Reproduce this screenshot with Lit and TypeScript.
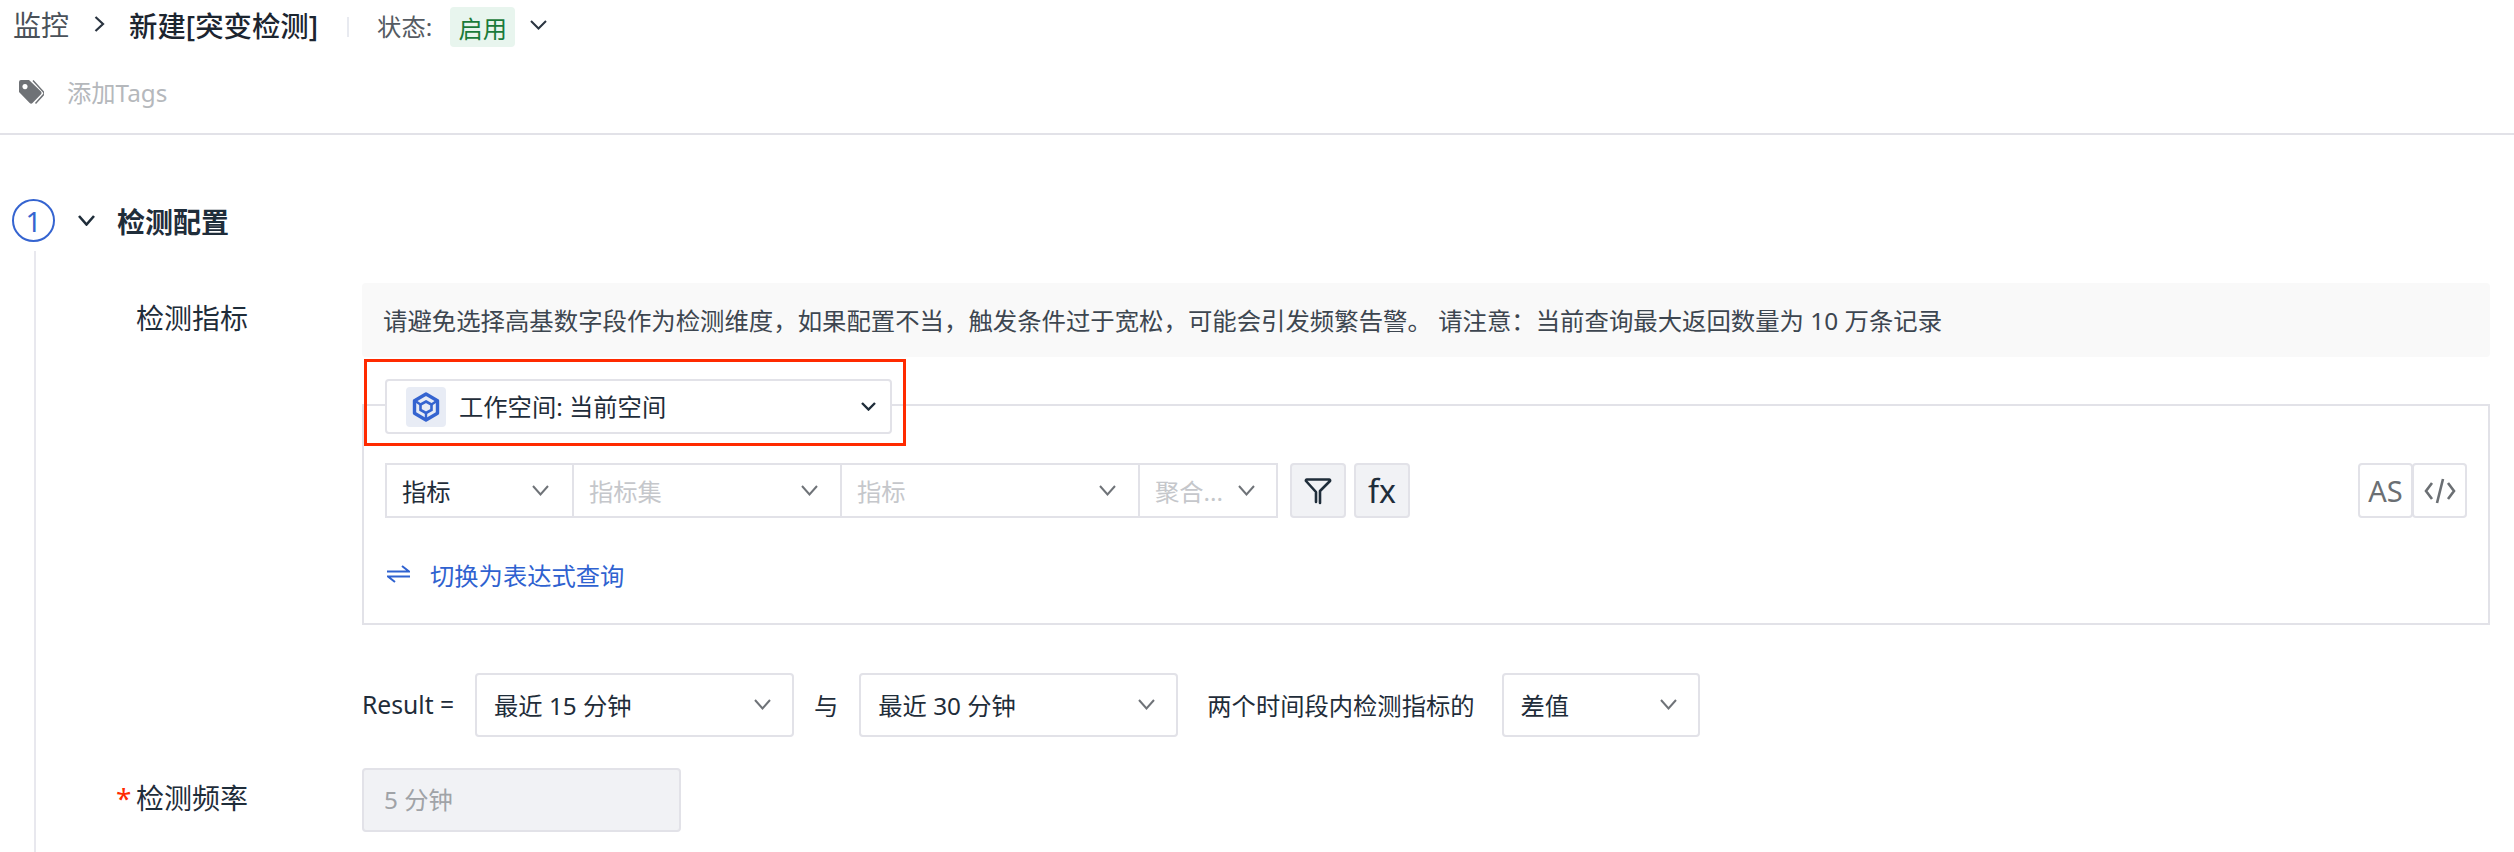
import { LitElement, html, css, svg } from 'lit'
import { customElement } from 'lit/decorators.js'

const chevron = (w: number, h: number, color: string, sw = 2) => html`
    <svg class="chev" width=${w} height=${h} viewBox="0 0 ${w} ${h}" fill="none" stroke=${color} stroke-width=${sw}>
        <polyline points="1,1 ${w / 2},${h - 1.5} ${w - 1},1" />
    </svg>
`

const hexIcon = svg`
    <path d="M14 2 L25.5 8.7 V21.3 L14 28 L2.5 21.3 V8.7 Z" fill="none" stroke="#3564d0" stroke-width="3.4" stroke-linejoin="round" />
    <path d="M14 9.5 L19.5 12.6 V18 L14 21 L8.5 18 V12.6 Z" fill="none" stroke="#3564d0" stroke-width="2.6" />
    <path d="M14 21 V27 M4 9.6 L8.5 12.6 M24 9.6 L19.5 12.6" stroke="#3564d0" stroke-width="2.4" />
`

@customElement('app-root')
export class AppRoot extends LitElement {
    static styles = css`
        :host {
            display: block;
            width: 2514px;
            height: 852px;
            overflow: hidden;
            background: #fff;
            color: #1f2d3a;
            font-family: 'Noto Sans', 'Noto Sans CJK SC', sans-serif;
            font-size: 24.3px;
        }

        .chev {
            flex: none;
        }

        /* header */
        .head {
            height: 135px;
            box-sizing: border-box;
            border-bottom: 2px solid #e2e2e8;
            padding: 7px 0 0 13px;
        }
        .crumbs {
            display: flex;
            align-items: center;
            height: 40px;
        }
        .crumb-root {
            font-size: 28px;
            color: #4a5159;
            margin-top: -6px;
        }
        .crumb-sep {
            margin: -6px 0 0 25px;
        }
        .crumb-title {
            font-size: 28.4px;
            font-weight: 500;
            color: #1c2530;
            margin: -6px 0 0 24px;
        }
        .crumb-div {
            width: 2px;
            height: 20px;
            background: #e8eaf0;
            margin: 0 28px 0 29px;
        }
        .status-label {
            color: #555b62;
            margin-top: -3px;
        }
        .status-tag {
            width: 65px;
            height: 40px;
            margin-left: 18px;
            border-radius: 4px;
            background: #e8f5ee;
            color: #1a7a3a;
            display: flex;
            align-items: center;
            justify-content: center;
        }
        .status-chev {
            display: flex;
            margin: -5px 0 0 15px;
        }
        .tags {
            display: flex;
            align-items: center;
            height: 40px;
            margin: 24px 0 0 5px;
            color: #b5b8bc;
        }
        .tags svg {
            margin: 2px 23px 0 0;
        }

        /* step rail + body */
        .section {
            display: grid;
            grid-template-columns: 78px 1fr;
            padding-top: 64px;
        }
        .rail {
            display: flex;
            flex-direction: column;
            height: 660px;
        }
        .circle {
            width: 43px;
            height: 43px;
            box-sizing: border-box;
            margin-left: 12px;
            border: 2px solid #3564d0;
            border-radius: 50%;
            color: #3564d0;
            font-size: 28px;
            display: flex;
            align-items: center;
            justify-content: center;
        }
        .rail-line {
            flex: 1;
            width: 2px;
            margin: 9px 0 0 34px;
            background: #e8e8ee;
        }
        .title-row {
            display: flex;
            align-items: center;
            height: 43px;
        }
        .title-row h2 {
            margin: 0 0 0 22px;
            font-size: 28px;
            font-weight: 700;
            color: #1f2d3a;
        }
        .form-row {
            display: grid;
            grid-template-columns: 284px 2128px;
        }
        .form-row.first {
            margin-top: 41px;
        }
        .label {
            font-size: 28px;
            padding-left: 58px;
            line-height: 71px;
            white-space: nowrap;
        }
        .req {
            color: #ff2a00;
            display: inline-block;
            width: 20px;
            margin-left: -20px;
        }

        .notice {
            height: 74px;
            box-sizing: border-box;
            padding: 0 21px 2px;
            display: flex;
            align-items: center;
            background: #f9f9f9;
            border-radius: 4px;
            color: #3d4650;
            font-size: 24.4px;
            white-space: nowrap;
        }

        /* query panel */
        .panel {
            height: 221px;
            box-sizing: border-box;
            margin-top: 47px;
            padding: 0 21px;
            border: 2px solid #e2e2e8;
        }
        .ws-select {
            position: relative;
            width: 507px;
            height: 55px;
            box-sizing: border-box;
            margin-top: -27px;
            padding: 0 14px 0 19px;
            display: flex;
            align-items: center;
            background: #fff;
            border: 2px solid #e2e2e8;
            border-radius: 4px;
        }
        .ws-icon {
            width: 40px;
            height: 40px;
            flex: none;
            border-radius: 4px;
            background: #e8ecf5;
            display: flex;
            align-items: center;
            justify-content: center;
        }
        .ws-text {
            flex: 1;
            margin: -2px 0 0 13px;
            white-space: nowrap;
        }
        .highlight {
            position: absolute;
            left: -23px;
            right: -16px;
            top: -22px;
            bottom: -14px;
            border: 3px solid #ff2a00;
        }
        .query {
            display: flex;
            height: 55px;
            margin-top: 29px;
        }
        .seg {
            box-sizing: border-box;
            height: 55px;
            margin-right: -2px;
            padding: 0 22px 0 15px;
            display: flex;
            align-items: center;
            justify-content: space-between;
            border: 2px solid #e2e2e8;
            white-space: nowrap;
        }
        .seg.metric { width: 189px; padding-right: 23px; }
        .seg.set { width: 270px; }
        .seg.name { width: 300px; }
        .seg.agg { width: 140px; margin-right: 0; padding-right: 21px; }
        .placeholder {
            color: #c5c7cb;
        }
        .tool {
            box-sizing: border-box;
            width: 56px;
            height: 55px;
            margin-left: 8px;
            display: flex;
            align-items: center;
            justify-content: center;
            background: #f1f2f5;
            border: 2px solid #e2e2e8;
            border-radius: 4px;
            font-size: 32px;
        }
        .tool.first {
            margin-left: 12px;
        }
        .side-tools {
            display: flex;
            margin-left: auto;
        }
        .side {
            box-sizing: border-box;
            width: 55px;
            height: 55px;
            margin-left: -1px;
            display: flex;
            align-items: center;
            justify-content: center;
            border: 2px solid #e2e2e8;
            border-radius: 4px;
            color: #6b6f73;
            font-size: 29px;
        }
        .switch {
            display: flex;
            align-items: center;
            height: 36px;
            margin-top: 38px;
            color: #2f62d0;
        }
        .switch svg {
            margin: 0 20px 0 2px;
        }

        /* result row */
        .result {
            display: flex;
            align-items: center;
            height: 64px;
            margin: 48px 0 0 284px;
            white-space: nowrap;
        }
        .box {
            box-sizing: border-box;
            height: 64px;
            display: flex;
            align-items: center;
            justify-content: space-between;
            padding: 0 21px 2px 17px;
            border: 2px solid #e2e2e8;
            border-radius: 4px;
        }
        .w319 { width: 319px; }
        .w198 { width: 198px; }
        .res-label { margin: -2px 21px 0 0; width: 92px; font-size: 24.7px; }
        .res-and { margin: -2px 21px 0 20px; }
        .res-desc { margin: -2px 27px 0 29px; }

        .freq {
            margin-top: 31px;
        }
        .freq .label {
            line-height: 61px;
        }
        .input-off {
            box-sizing: border-box;
            width: 319px;
            height: 64px;
            padding: 0 0 3px 20px;
            display: flex;
            align-items: center;
            background: #f1f2f5;
            border: 2px solid #e2e2e8;
            border-radius: 4px;
            color: #a0a3a7;
        }
    `

    render() {
        return html`
            <header class="head">
                <div class="crumbs">
                    <span class="crumb-root">监控</span>
                    <svg class="crumb-sep" width="11" height="16" viewBox="0 0 11 16" fill="none" stroke="#2a3440" stroke-width="2.2">
                        <polyline points="1.5,1 9,8 1.5,15" />
                    </svg>
                    <span class="crumb-title">新建[突变检测]</span>
                    <span class="crumb-div"></span>
                    <span class="status-label">状态:</span>
                    <span class="status-tag">启用</span>
                    <span class="status-chev">${chevron(17, 10, '#2a3440')}</span>
                </div>
                <div class="tags">
                    <svg width="26" height="26" viewBox="0 0 26 26">
                        <path d="M1 3 a2 2 0 0 1 2 -2 H11 L23 12.5 a2 2 0 0 1 0 2.8 L14.5 24 a2 2 0 0 1 -2.8 0 L1 13 Z M7 5 a2.6 2.6 0 1 0 .01 0 Z" fill="#6f7276" fill-rule="evenodd" />
                        <path d="M15 1.5 L25.5 13 a2 2 0 0 1 0 2.6 L17.5 24.5" fill="none" stroke="#6f7276" stroke-width="1.5" />
                    </svg>
                    <span>添加Tags</span>
                </div>
            </header>

            <section class="section">
                <div class="rail">
                    <div class="circle">1</div>
                    <div class="rail-line"></div>
                </div>
                <div class="body">
                    <div class="title-row">
                        ${chevron(17, 11, '#1f2d3a', 2.6)}
                        <h2>检测配置</h2>
                    </div>

                    <div class="form-row first">
                        <div class="label">检测指标</div>
                        <div>
                            <div class="notice">请避免选择高基数字段作为检测维度，如果配置不当，触发条件过于宽松，可能会引发频繁告警。 请注意：当前查询最大返回数量为 10 万条记录</div>
                            <div class="panel">
                                <div class="ws-select">
                                    <span class="ws-icon">
                                        <svg width="28" height="30" viewBox="0 0 28 30">${hexIcon}</svg>
                                    </span>
                                    <span class="ws-text">工作空间: 当前空间</span>
                                    ${chevron(15, 9, '#1f2d3a', 2.4)}
                                    <div class="highlight"></div>
                                </div>
                                <div class="query">
                                    <div class="seg metric"><span>指标</span>${chevron(17, 11, '#6f7378')}</div>
                                    <div class="seg set"><span class="placeholder">指标集</span>${chevron(17, 11, '#6f7378')}</div>
                                    <div class="seg name"><span class="placeholder">指标</span>${chevron(17, 11, '#6f7378')}</div>
                                    <div class="seg agg"><span class="placeholder">聚合...</span>${chevron(17, 11, '#6f7378')}</div>
                                    <div class="tool first">
                                        <svg width="28" height="28" viewBox="0 0 28 28" fill="none" stroke="#1f2d3a" stroke-width="2.6" stroke-linecap="round" stroke-linejoin="round">
                                            <path d="M12 25 V15 L2 4 a1 1 0 0 1 1 -1.5 H25 a1 1 0 0 1 1 1.5 L16 14 V26" />
                                        </svg>
                                    </div>
                                    <div class="tool">fx</div>
                                    <div class="side-tools">
                                        <div class="side">AS</div>
                                        <div class="side">
                                            <svg width="32" height="26" viewBox="0 0 32 26" fill="none" stroke="#6b6f73" stroke-width="2.6">
                                                <polyline points="8,5 2,13 8,21" />
                                                <line x1="19" y1="1" x2="13" y2="25" />
                                                <polyline points="24,5 30,13 24,21" />
                                            </svg>
                                        </div>
                                    </div>
                                </div>
                                <div class="switch">
                                    <svg width="23" height="18" viewBox="0 0 23 18" fill="none" stroke="#2f62d0" stroke-width="2">
                                        <polyline points="15,1 22,6.5 0,6.5" />
                                        <polyline points="8,17 1,11.5 23,11.5" />
                                    </svg>
                                    <span>切换为表达式查询</span>
                                </div>
                            </div>
                        </div>
                    </div>

                    <div class="result">
                        <span class="res-label">Result =</span>
                        <div class="box w319"><span>最近 15 分钟</span>${chevron(17, 11, '#6f7378')}</div>
                        <span class="res-and">与</span>
                        <div class="box w319"><span>最近 30 分钟</span>${chevron(17, 11, '#6f7378')}</div>
                        <span class="res-desc">两个时间段内检测指标的</span>
                        <div class="box w198"><span>差值</span>${chevron(17, 11, '#6f7378')}</div>
                    </div>

                    <div class="form-row freq">
                        <div class="label"><span class="req">*</span>检测频率</div>
                        <div class="input-off">5 分钟</div>
                    </div>
                </div>
            </section>
        `
    }
}
